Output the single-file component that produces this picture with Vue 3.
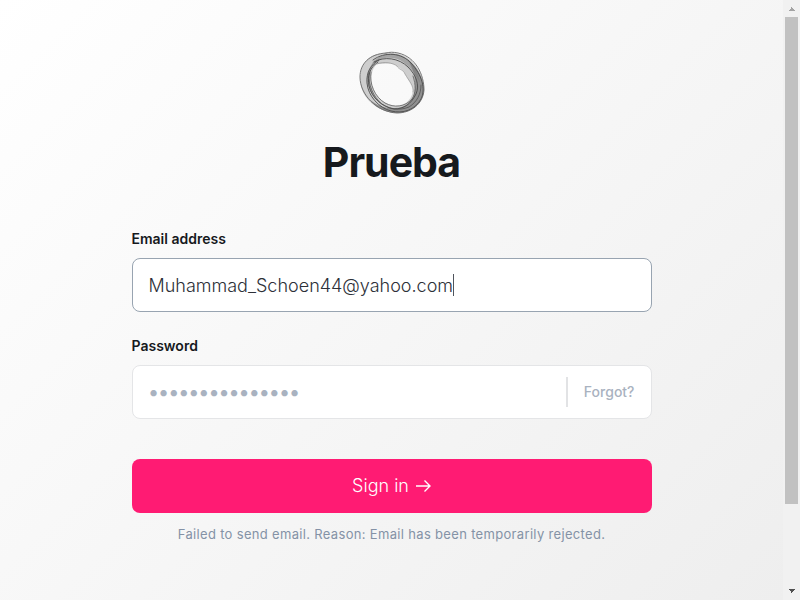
<script setup>
import { ref } from 'vue'

const email = ref('Muhammad_Schoen44@yahoo.com')
const password = ref('')
const message = ref('Failed to send email. Reason: Email has been temporarily rejected.')
</script>

<template>
  <div class="shell">
    <main class="page">
      <form class="card" @submit.prevent>
        <svg class="logo" viewBox="0 0 84 75" aria-hidden="true">
          <path fill="#cecece" fill-rule="evenodd" d="M36 8C48 7 58 11 65 20C72 29 76 42 72 53C68 63 57 68 47 68C32 68 18 58 13 47C9 37 9 24 16 16C21 10 28 8 36 8ZM27 19C21 24 20 35 23 43C26 54 37 60 45 61C53 61 61 57 63 46C64 41 58 35 55 29C53 24 50 24 47 21C42 17 34 19 27 19Z" />
          <path fill="#6e6e6e" fill-opacity=".65" d="M57 14C67 21 73 32 74 43C74 59 61 68 47 68C36 68 26 63 20 55C28 61 37 64 45 63C55 63 64 56 65 45C66 33 63 22 57 14Z" />
          <path fill="#777" fill-opacity=".5" d="M23 17C31 9 43 6 54 12C63 17 69 28 70 38C63 24 53 14 43 13C34 12 27 14 22 21C17 31 20 46 27 55C19 49 15 36 18 26Z" />
          <g fill="none" stroke="#4a4a4a" stroke-linecap="round">
            <path stroke-width=".9" d="M23 15C35 6 52 8 61 18C72 30 76 44 71 54C65 65 53 69 41 66C29 63 18 51 17 38C16 28 21 19 29 15" />
            <path stroke-width=".9" d="M24 17C34 11 49 13 58 22C66 30 70 40 66 49C61 59 54 64 44 64C32 62 22 53 19 41C17 31 20 22 28 17" />
            <path stroke-width=".7" d="M19 28C18 39 23 52 32 59C40 64 49 66 59 62C67 57 71 49 71 40M21 27C19 39 25 52 35 58C44 63 55 62 62 54C66 48 66 40 63 31" />
            <path stroke-width=".9" stroke="#666" d="M36 8C19 9 10 19 10 32C10 50 27 67 47 68C61 68 73 59 74 45C74 30 66 12 48 8C43 7 40 7 36 8" />
            <path stroke-width=".6" stroke="#888" d="M27 19C34 16 43 18 47 21C49 25 53 24 55 29C59 36 64 41 63 47" />
          </g>
        </svg>
        <h1>Prueba</h1>

        <label for="email">Email address</label>
        <div class="field active">
          <input id="email" v-model="email" type="email" autocomplete="username">
          <span class="caret-track" aria-hidden="true"><span>{{ email }}</span></span>
        </div>

        <label for="password">Password</label>
        <div class="field">
          <input id="password" v-model="password" type="password" placeholder="•••••••••••••••" autocomplete="current-password">
          <a class="forgot" href="#">Forgot?</a>
        </div>

        <button class="submit" type="submit">
          Sign in
          <svg viewBox="0 0 16 16" aria-hidden="true"><path d="M1 8H15M9.500 2.500L15 8L9.500 13.500" /></svg>
        </button>
        <p class="message" role="alert">{{ message }}</p>
      </form>
    </main>
    <div class="scrollbar" aria-hidden="true">
      <svg viewBox="0 0 17 17"><path fill="#a3a3a3" d="M8 7h1v1h1v1h1v1h1v1H6v-1h1V9h1z" /></svg>
      <div class="rail"><div class="thumb"></div></div>
      <svg viewBox="0 0 17 17"><path fill="#505050" d="M6 6h6v1h-1v1h-1v1H9v1H8V8H7V7H6z" /></svg>
    </div>
  </div>
</template>

<style>
body {
  margin: 0;
}
</style>

<style scoped>
* {
  box-sizing: border-box;
}
.shell {
  display: grid;
  grid-template-columns: minmax(0, 1fr) 17px;
  min-height: 100vh;
  font-family: Inter, "Liberation Sans", sans-serif;
  color: #16191d;
}
.page {
  padding: 45px 24px 32px;
  background: linear-gradient(135deg, #fff, #eee);
}
.card {
  display: flex;
  flex-direction: column;
  max-width: 520px;
  margin: 0 auto;
}
.logo {
  width: 84px;
  height: 75px;
  align-self: center;
}
h1 {
  margin: 16px 0 40px;
  font-size: 41px;
  line-height: 52px;
  font-weight: 700;
  letter-spacing: -1px;
  text-align: center;
}
label {
  margin-bottom: 8px;
  font-size: 14px;
  line-height: 22px;
  font-weight: 600;
}
.field {
  position: relative;
  display: flex;
  align-items: center;
  height: 54px;
  margin-bottom: 23px;
  border: 1px solid #e4e5e7;
  border-radius: 8px;
  background: #fff;
}
.active {
  border-color: #98a4b1;
}
input {
  flex: 1;
  min-width: 0;
  height: 100%;
  padding: 0 16px;
  border: 0;
  outline: 0;
  background: transparent;
  font: 300 18px/24px Inter, "Liberation Sans", sans-serif;
  color: #2d3038;
}
input::placeholder {
  color: #a9b2c0;
  font-size: 20px;
  font-weight: 600;
  opacity: 1;
}
.caret-track {
  position: absolute;
  left: 16px;
  font-size: 18px;
  line-height: 22px;
  font-weight: 300;
  border-right: 1px solid #50545c;
  pointer-events: none;
}
.caret-track span {
  visibility: hidden;
}
.forgot {
  padding: 0 16px;
  border-left: 2px solid #e2e3e5;
  font-size: 14px;
  line-height: 30px;
  font-weight: 500;
  color: #a9b2c0;
  text-decoration: none;
}
.submit {
  display: flex;
  align-items: center;
  justify-content: center;
  gap: 6px;
  height: 54px;
  margin: 17px 0 9px;
  padding: 0;
  border: 0;
  border-radius: 8px;
  background: #ff1b73;
  color: #fff;
  font: 300 18px/24px Inter, "Liberation Sans", sans-serif;
}
.submit svg {
  width: 16px;
  height: 16px;
  fill: none;
  stroke: currentColor;
  stroke-width: 1.4;
}
.message {
  margin: 0;
  font-size: 13px;
  line-height: 24px;
  letter-spacing: 0.025em;
  color: #8492a6;
  text-align: center;
}
.scrollbar {
  display: flex;
  flex-direction: column;
  background: #f1f1f1;
}
.scrollbar svg {
  width: 17px;
  height: 17px;
}
.rail {
  flex: 1;
  padding: 0 2px;
}
.thumb {
  height: 86%;
  background: #c1c1c1;
}
</style>
